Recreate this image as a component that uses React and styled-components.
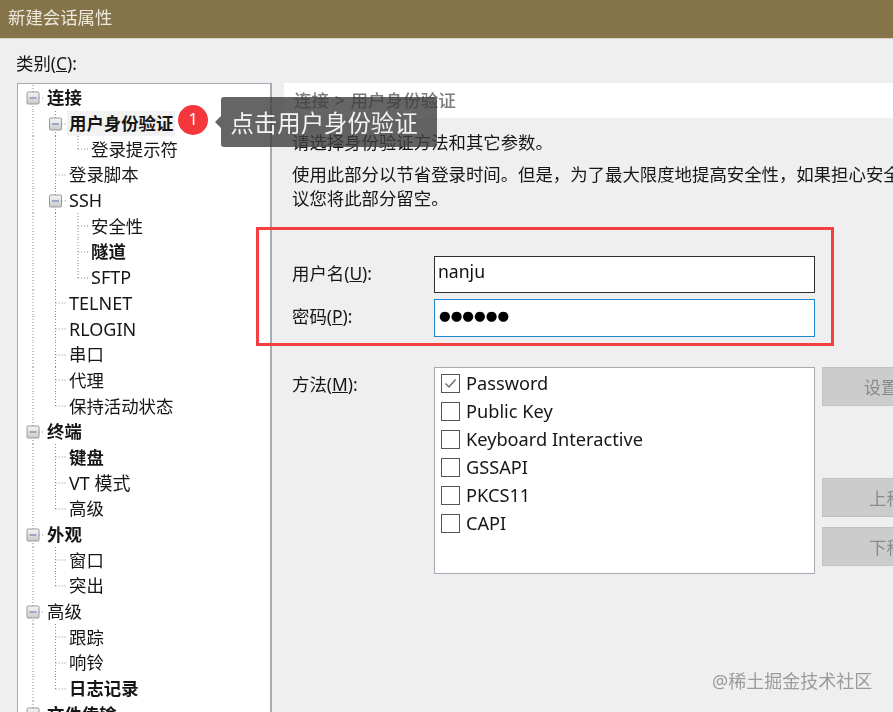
import React from "react";
import styled, { createGlobalStyle } from "styled-components";

const Global = createGlobalStyle`
  html, body { margin: 0; padding: 0; width: 893px; height: 712px; overflow: hidden; background: #efefef; }
  * { box-sizing: border-box; }
  body { font-family: "Noto Sans", "Noto Sans CJK SC", sans-serif; font-size: 17.4px; color: #161616; }
`;

const Dialog = styled.div`
  position: relative;
  width: 893px;
  height: 712px;
  overflow: hidden;
  display: flex;
  flex-direction: column;
  filter: blur(0.35px);
`;
const TitleBar = styled.div`
  height: 39px;
  flex: none;
  background: #85744a;
  border-bottom: 1px solid #d8d2c2;
  color: #ece8dc;
  padding: 0 8px 5px;
  display: flex;
  align-items: center;
`;
const Body = styled.div`
  flex: 1;
  min-height: 0;
  display: flex;
  padding-left: 17px;
`;
const LeftColumn = styled.div`
  width: 255px;
  flex: none;
  display: flex;
  flex-direction: column;
`;
const CategoryLabel = styled.div`
  height: 44px;
  padding: 10px 0 0 0;
  line-height: 28px;
  margin-left: -1px;
`;
const TreeBox = styled.div`
  flex: 1;
  background: #fff;
  border: 1px solid #a6abb3;
  border-width: 1px 2px 0 1px;
  overflow: hidden;
  padding-top: 1px;
`;
const Row = styled.div`
  height: 25.7px;
  display: flex;
  align-items: center;
`;
const Guides = styled.svg`
  flex: none;
  height: 26px;
  overflow: visible;
`;
const RowLabel = styled.span`
  font-weight: ${(p) => (p.$bold ? 700 : 400)};
  font-size: ${(p) => (p.$latin ? "18px" : "inherit")};
  line-height: 25px;
  white-space: nowrap;
  padding: 0 2px;
  margin-left: -2px;
  background: ${(p) => (p.$selected ? "#f2f2f2" : "transparent")};
`;
const Step = styled.span`
  position: absolute;
  left: 178px;
  top: 105px;
  width: 30px;
  height: 30px;
  border-radius: 50%;
  background: #f5363b;
  color: #fff;
  font-size: 17px;
  font-family: "Noto Sans", sans-serif;
  display: flex;
  align-items: center;
  justify-content: center;
  padding-bottom: 3px;
`;
const Tip = styled.div`
  position: absolute;
  left: 221px;
  top: 97px;
  width: 216px;
  height: 50px;
  border-radius: 3px;
  background: rgba(62, 62, 62, 0.8);
  color: #f4f4f4;
  font-size: 23.4px;
  padding-left: 9.5px;
  display: flex;
  align-items: center;
  white-space: nowrap;
  &::before {
    content: "";
    position: absolute;
    left: -6px;
    top: 19px;
    border-style: solid;
    border-width: 6px 6px 6px 0;
    border-color: transparent rgba(62, 62, 62, 0.8) transparent transparent;
  }
`;
const RightColumn = styled.div`
  flex: 1;
  min-width: 0;
  margin-left: 12px;
  padding-top: 44px;
  white-space: nowrap;
`;
const Crumb = styled.div`
  height: 35px;
  margin-right: -20px;
  background: #fff;
  color: #7b7b7b;
  font-weight: 500;
  font-size: 17.6px;
  word-spacing: 1px;
  padding-left: 10px;
  line-height: 34px;
`;
const Intro = styled.p`
  margin: 11px 0 0;
  padding-left: 8px;
  line-height: 26px;
`;
const Para = styled.p`
  margin: 7px 0 0;
  padding-left: 8px;
  line-height: 24px;
`;
const Marked = styled.div`
  position: relative;
  margin: 17px 0 0 -28px;
  width: 578px;
  height: 119px;
  border: 3px solid #f43f42;
  padding: 26px 0 0 34px;
  display: flex;
  flex-direction: column;
  gap: 6px;
`;
const Field = styled.div`
  display: grid;
  grid-template-columns: 141px 381px;
  align-items: center;
`;
const FieldLabel = styled.span`
  margin: -5px 0 0 -1px;
`;
const TextBox = styled.input`
  height: ${(p) => (p.$focus ? 38 : 37)}px;
  width: 100%;
  padding: 0 2px 8px 3px;
  margin: 0;
  border: 1px solid ${(p) => (p.$focus ? "#1f86d0" : "#2e2e2e")};
  border-radius: 0;
  outline: none;
  background: #fff;
  color: #111;
  font: inherit;
  font-size: 17.6px;
`;
const SecretBox = styled(TextBox)`
  font-family: "DejaVu Sans", sans-serif;
  font-size: 13.4px;
  padding: 0 2px 6px 4px;
  color: #000;
`;
const MethodRow = styled.div`
  display: grid;
  grid-template-columns: 141px 381px 160px;
  margin-top: 21px;
  padding-left: 9px;
`;
const MethodLabel = styled.div`
  line-height: 26px;
  padding-top: 4px;
  margin-left: -1px;
`;
const MethodList = styled.div`
  height: 207px;
  background: #fff;
  border: 1px solid #a6abb3;
  padding: 1px 0 0 6px;
  font-size: 18.2px;
`;
const Method = styled.div`
  height: 28px;
  display: flex;
  align-items: center;
  gap: 6px;
  line-height: 26px;
`;
const Box = styled.span`
  width: 19px;
  height: 19px;
  flex: none;
  border: 1px solid #555;
  background: #fff;
  display: flex;
`;
const Actions = styled.div`
  margin-left: 7px;
  width: 152px;
  display: flex;
  flex-direction: column;
`;
const Action = styled.div`
  height: 39px;
  margin-top: ${(p) => p.$top || 0}px;
  background: #cccccc;
  border: 1px solid #c2c2c2;
  color: #8a8a8a;
  display: flex;
  align-items: center;
  justify-content: center;
  white-space: nowrap;
`;
const Watermark = styled.div`
  position: absolute;
  left: 712px;
  top: 668px;
  color: #9b9b9b;
  font-size: 18px;
  line-height: 26px;
  white-space: nowrap;
`;
const Key = styled.span`
  text-decoration: underline;
`;

const tree = [
  { t: "连接", b: 1, c: [
    { t: "用户身份验证", b: 1, s: 1, c: [{ t: "登录提示符" }] },
    { t: "登录脚本" },
    { t: "SSH", c: [{ t: "安全性" }, { t: "隧道", b: 1 }, { t: "SFTP" }] },
    { t: "TELNET" }, { t: "RLOGIN" }, { t: "串口" }, { t: "代理" }, { t: "保持活动状态" },
  ] },
  { t: "终端", b: 1, c: [{ t: "键盘", b: 1 }, { t: "VT 模式" }, { t: "高级" }] },
  { t: "外观", b: 1, c: [{ t: "窗口" }, { t: "突出" }] },
  { t: "高级", c: [{ t: "跟踪" }, { t: "响铃" }, { t: "日志记录", b: 1 }] },
  { t: "文件传输", b: 1, c: [] },
];

function flatten(nodes, level = 0, open = []) {
  return nodes.flatMap((n, i) => {
    const last = level > 0 && i === nodes.length - 1;
    return [
      { ...n, level, open, last },
      ...flatten(n.c || [], level + 1, [...open, !last]),
    ];
  });
}
const rows = flatten(tree);
const X = [15, 37.5, 60];
const DOT = { stroke: "#8a8a8a", strokeWidth: 1, strokeDasharray: "1 2", fill: "none" };

function RowGuides({ level, open, last, expander }) {
  const x = X[level];
  return (
    <Guides width={29 + 22 * level} viewBox={`0 0 ${29 + 22 * level} 26`}>
      {open.map((o, i) => (o ? <path key={i} d={`M${X[i]} 0V26`} {...DOT} /> : null))}
      <path d={`M${x} 0V${last ? 13 : 26}`} {...DOT} />
      <path d={`M${x} 13H${x + 11}`} {...DOT} />
      {expander && (
        <g>
          <defs>
            <linearGradient id="exp" x1="0" y1="0" x2="0" y2="1">
              <stop offset="0" stopColor="#f6f6f6" />
              <stop offset="1" stopColor="#c9c9c9" />
            </linearGradient>
          </defs>
          <rect x={x - 6} y={7} width={12} height={12} rx={1} fill="url(#exp)" stroke="#9a9a9a" />
          <path d={`M${x - 3.5} 13H${x + 3.5}`} stroke="#5a6fae" strokeWidth={1} />
        </g>
      )}
    </Guides>
  );
}

export default function App() {
  return (
    <Dialog>
      <Global />
      <TitleBar>新建会话属性</TitleBar>
      <Body>
        <LeftColumn>
          <CategoryLabel>类别(<Key>C</Key>):</CategoryLabel>
          <TreeBox>
            {rows.map((r, i) => (
              <Row key={i}>
                <RowGuides level={r.level} open={r.open} last={r.last} expander={!!r.c} />
                <RowLabel $bold={!!r.b} $selected={!!r.s} $latin={/^[A-Z]/.test(r.t)}>{r.t}</RowLabel>
              </Row>
            ))}
          </TreeBox>
        </LeftColumn>
        <RightColumn>
          <Crumb>连接 &gt; 用户身份验证</Crumb>
          <Intro>请选择身份验证方法和其它参数。</Intro>
          <Para>
            使用此部分以节省登录时间。但是，为了最大限度地提高安全性，如果担心安全问题，建
            <br />
            议您将此部分留空。
          </Para>
          <Marked>
            <Field>
              <FieldLabel>用户名(<Key>U</Key>):</FieldLabel>
              <TextBox readOnly value="nanju" />
            </Field>
            <Field>
              <FieldLabel>密码(<Key>P</Key>):</FieldLabel>
              <SecretBox $focus readOnly value="●●●●●●" />
            </Field>
          </Marked>
          <MethodRow>
            <MethodLabel>方法(<Key>M</Key>):</MethodLabel>
            <MethodList>
              {["Password", "Public Key", "Keyboard Interactive", "GSSAPI", "PKCS11", "CAPI"].map((m, i) => (
                <Method key={m}>
                  <Box>
                    {i === 0 && (
                      <svg width="17" height="17" viewBox="0 0 17 17">
                        <path d="M3.5 8.5l3.5 3.5 6.5-7.5" fill="none" stroke="#6b6b6b" strokeWidth="1.4" />
                      </svg>
                    )}
                  </Box>
                  {m}
                </Method>
              ))}
            </MethodList>
            <Actions>
              <Action>设置(S)...</Action>
              <Action $top={72}>上移(U)</Action>
              <Action $top={10}>下移(D)</Action>
            </Actions>
          </MethodRow>
        </RightColumn>
      </Body>
      <Step>1</Step>
      <Tip>点击用户身份验证</Tip>
      <Watermark>@稀土掘金技术社区</Watermark>
    </Dialog>
  );
}
